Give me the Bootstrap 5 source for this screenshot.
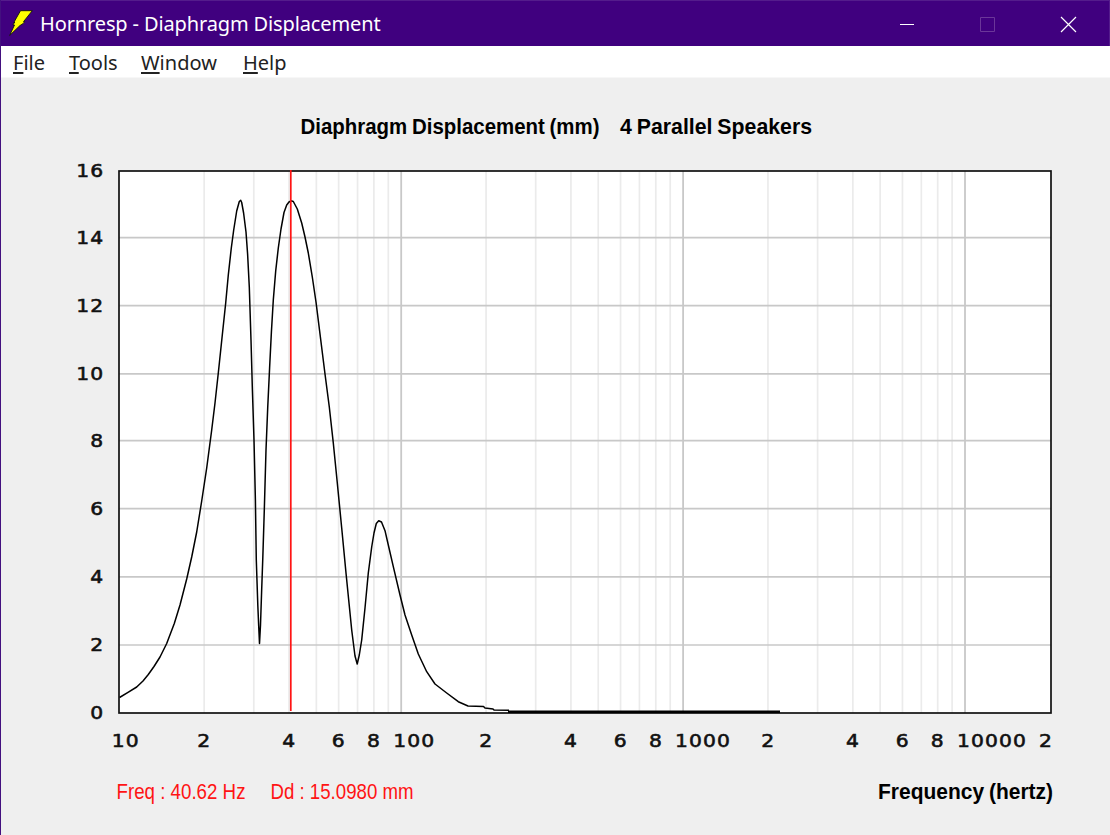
<!DOCTYPE html>
<html lang="en">
  <head>
    <meta charset="UTF-8" />
    <meta name="viewport" content="width=device-width, initial-scale=1.0" />
    <title>Hornresp - Diaphragm Displacement</title>
    <link
      href="https://cdn.jsdelivr.net/npm/bootstrap@5.3.0/dist/css/bootstrap.min.css"
      rel="stylesheet"
    />
    <style>
      body {
        background-color: #efefef;
        font-family: "Noto Sans", "Open Sans", sans-serif;
      }
      .app-window {
        border-left: 1px solid #43107f;
      }
      .title-bar {
        height: 46px;
        background-color: #40007f;
        border-top: 1px solid #541c8c;
        border-right: 1px solid #541c8c;
      }
      .title-text {
        font-size: 20px;
        line-height: 28px;
        letter-spacing: -0.13px;
        margin-left: 7px;
        padding-top: 1px;
      }
      .menu-bar {
        height: 32px;
        background-color: #fff;
        border-bottom: 1px solid #f7f7f7;
        padding-left: 12px;
      }
      .menu-bar .nav-link {
        color: #222;
        font-size: 20px;
        line-height: 32px;
        padding: 1px 0 0;
      }
      .menu-bar u {
        text-decoration-thickness: 2px;
        text-underline-offset: 2px;
      }
      .menu-file { width: 56px; }
      .menu-tools { width: 72px; }
      .menu-window { width: 102px; }
      .heading-text {
        font: bold 21.5px "Liberation Sans", sans-serif;
        word-spacing: -1px;
      }
      .readout-text {
        font: 21.5px "Liberation Sans", sans-serif;
        fill: #ff1414;
      }
      .axis-text {
        font: 18.5px "DejaVu Sans", sans-serif;
        letter-spacing: 1px;
        fill: #111;
        stroke: #111;
        stroke-width: 0.6px;
      }
    </style>
  </head>
  <body>
    <div class="app-window d-flex flex-column vh-100 overflow-hidden">
      <div class="title-bar d-flex align-items-center text-white flex-shrink-0">
        <svg class="ms-2" width="24" height="28" viewBox="0 0 24 28">
          <path
            d="M11.500 .7H23.300L14.500 11.700H15.700L14 13.700L11 15.500L.6 25.500L5.500 15H4L4.500 13.500L6 12.500H4.800Z"
            fill="#ff0"
            stroke="#111"
            stroke-width="0.9"
          />
        </svg>
        <span class="title-text me-auto">Hornresp - Diaphragm Displacement</span>
        <svg width="209" height="44" viewBox="0 0 209 44" fill="none">
          <path d="M0 22.500H14" stroke="#fff" />
          <path d="M80.500 15.500H94.500V29.500H80.500Z" stroke="#6b3699" />
          <path d="M161 15L176 30M176 15L161 30" stroke="#fff" stroke-width="1.2" />
        </svg>
      </div>

      <nav class="menu-bar nav flex-nowrap flex-shrink-0">
        <a class="nav-link menu-file" href="#"><u>F</u>ile</a>
        <a class="nav-link menu-tools" href="#"><u>T</u>ools</a>
        <a class="nav-link menu-window" href="#"><u>W</u>indow</a>
        <a class="nav-link" href="#"><u>H</u>elp</a>
      </nav>

      <svg class="d-block" width="1109" height="757" viewBox="1 78 1109 757">
        <text class="heading-text" x="300.500" y="133.500" textLength="299" lengthAdjust="spacingAndGlyphs">Diaphragm Displacement (mm)</text>
        <text class="heading-text" x="620" y="133.500" textLength="192" lengthAdjust="spacingAndGlyphs">4 Parallel Speakers</text>

        <rect x="119" y="171" width="932" height="542" fill="#fff" />
        <g id="gridLines"></g>
        <rect x="119" y="171" width="932" height="542" fill="none" stroke="#111" stroke-width="1.7" />
        <g id="axisLabels"></g>

        <polyline id="curve" fill="none" stroke="#000" stroke-width="1.5" stroke-linejoin="round" />
        <path d="M508 711.700H780" stroke="#000" stroke-width="2.400" />
        <!-- cursor -->
        <path d="M290.800 170V711" stroke="#ff1414" stroke-width="1.700" />

        <text class="readout-text" x="116.500" y="798.500" textLength="129" lengthAdjust="spacingAndGlyphs">Freq : 40.62 Hz</text>
        <text class="readout-text" x="270.500" y="798.500" textLength="143" lengthAdjust="spacingAndGlyphs">Dd : 15.0980 mm</text>
        <text class="heading-text" x="878" y="798.500" textLength="175" lengthAdjust="spacingAndGlyphs">Frequency (hertz)</text>
      </svg>
    </div>

    <script src="https://cdn.jsdelivr.net/npm/bootstrap@5.3.0/dist/js/bootstrap.bundle.min.js"></script>
    <script>
      const rowY = [713, 645, 576.8, 508.7, 440.6, 373.8, 305.7, 237.6, 171];
      const points = [
        [119.5, 697.5], [128, 692.3], [136.7, 687], [143, 681], [148.3, 674.5], [154, 666.5],
        [160, 657], [166.7, 643.5], [174.3, 623.5], [180, 605], [186.7, 579],
        [191.7, 557], [196.7, 532], [201.7, 501], [206.7, 468], [211.7, 430],
        [215, 403], [218.3, 373], [222.3, 335], [225.7, 303], [228.3, 275],
        [231.3, 248], [233.7, 230], [236.7, 211], [239.3, 201.5], [240.7, 200.3],
        [241.7, 202.5], [243.6, 213], [246, 232], [247.6, 254], [249.3, 287],
        [251, 340], [252.4, 390], [254, 440], [255.4, 500], [256.3, 560],
        [257.8, 605], [258.7, 626], [259.5, 643.5], [260.5, 625],
        [261.6, 592], [262.8, 558], [264.3, 510], [266, 450], [267.7, 408],
        [269.6, 368], [271.4, 332], [273.3, 300], [275.7, 271], [278.3, 248],
        [281, 229], [284, 212.5], [286.7, 205], [289, 202], [291, 200.8], [293.3, 201.5],
        [297.3, 209], [301.7, 223], [305, 237], [308.3, 253], [312.3, 277],
        [316, 302], [320, 334], [325, 374], [329.3, 407], [333.3, 443],
        [337.3, 483], [341.7, 528], [346, 573], [348.7, 600], [351.7, 630],
        [355, 656], [357.2, 664], [359.3, 655], [361.7, 640], [365, 608],
        [368.3, 573], [371.7, 547], [374, 533], [376.3, 523.5], [378.7, 520.7],
        [381.5, 522], [385, 530.7], [388.3, 545], [393.3, 566.7], [400, 595],
        [405, 615], [411.7, 635], [418.3, 654], [426.7, 671.7], [435, 684],
        [446.7, 693], [458.3, 701.7], [468, 706], [483.5, 706.5], [485, 708],
        [493, 709], [494, 710], [509, 710.3],
      ];

      function freqX(freq) {
        return 119.3 + 281.9 * Math.log10(freq / 10);
      }

      function line(x1, y1, x2, y2, color, width) {
        return `<line x1="${x1}" y1="${y1}" x2="${x2}" y2="${y2}" stroke="${color}" stroke-width="${width}" />`;
      }

      // every character takes a 14px cell
      function label(x, y, value) {
        const length = String(value).length * 14;
        return `<text class="axis-text" x="${x}" y="${y}" textLength="${length}" lengthAdjust="spacingAndGlyphs">${value}</text>`;
      }

      function drawAxes() {
        let grid = "";
        let labels = "";

        for (let decade = 10; decade <= 10000; decade *= 10) {
          labels += label(freqX(decade) - (decade === 10 ? 7.5 : 8), 747.3, decade);
          for (let n = 2; n <= 9 && n * decade < 30000; n++) {
            const x = freqX(n * decade);
            if (n * decade < 20000) {
              grid += line(x, 171, x, 713, "#ebebeb", 1.7);
            }
            if (n % 2 === 0) {
              labels += label(n * decade === 20000 ? 1039 : x - 6.8, 747.3, n);
            }
          }
        }
        rowY.forEach((y, i) => {
          if (i > 0 && i < 8) grid += line(119, y, 1051, y, "#c8c8c8", 1.7);
          const value = i * 2;
          labels += label(value > 9 ? 76.3 : 90.3, y + 6, value);
        });
        for (let decade = 100; decade <= 10000; decade *= 10) {
          grid += line(freqX(decade), 171, freqX(decade), 713, "#c8c8c8", 1.8);
        }

        document.getElementById("gridLines").innerHTML = grid;
        document.getElementById("axisLabels").innerHTML = labels;
      }

      drawAxes();
      document.getElementById("curve").setAttribute("points", points.join(" "));
    </script>
  </body>
</html>
